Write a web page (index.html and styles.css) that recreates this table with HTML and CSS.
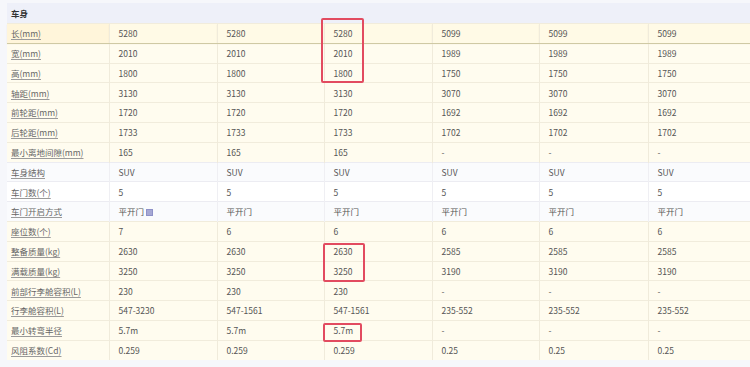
FILE: index.html
```html
<!DOCTYPE html>
<html lang="zh">
<head>
<meta charset="utf-8">
<link rel="stylesheet" href="styles.css">
</head>
<body>
<div class="page">
  <div class="wrap">
    <table class="spec">
      <colgroup>
        <col class="c-label"><col class="c1"><col class="c2"><col class="c3"><col class="c4"><col class="c5"><col class="c6">
      </colgroup>
      <thead>
        <tr class="group"><th colspan="7">车身</th></tr>
      </thead>
      <tbody>
        <tr class="hl"><td class="lb"><span>长(mm)</span></td><td>5280</td><td>5280</td><td>5280</td><td>5099</td><td>5099</td><td>5099</td></tr>
        <tr><td class="lb"><span>宽(mm)</span></td><td>2010</td><td>2010</td><td>2010</td><td>1989</td><td>1989</td><td>1989</td></tr>
        <tr><td class="lb"><span>高(mm)</span></td><td>1800</td><td>1800</td><td>1800</td><td>1750</td><td>1750</td><td>1750</td></tr>
        <tr><td class="lb"><span>轴距(mm)</span></td><td>3130</td><td>3130</td><td>3130</td><td>3070</td><td>3070</td><td>3070</td></tr>
        <tr><td class="lb"><span>前轮距(mm)</span></td><td>1720</td><td>1720</td><td>1720</td><td>1692</td><td>1692</td><td>1692</td></tr>
        <tr><td class="lb"><span>后轮距(mm)</span></td><td>1733</td><td>1733</td><td>1733</td><td>1702</td><td>1702</td><td>1702</td></tr>
        <tr><td class="lb"><span>最小离地间隙(mm)</span></td><td>165</td><td>165</td><td>165</td><td>-</td><td>-</td><td>-</td></tr>
        <tr class="plain alt"><td class="lb"><span>车身结构</span></td><td>SUV</td><td>SUV</td><td>SUV</td><td>SUV</td><td>SUV</td><td>SUV</td></tr>
        <tr class="plain"><td class="lb"><span>车门数(个)</span></td><td>5</td><td>5</td><td>5</td><td>5</td><td>5</td><td>5</td></tr>
        <tr class="plain alt"><td class="lb"><span>车门开启方式</span></td><td>平开门<i class="mark"></i></td><td>平开门</td><td>平开门</td><td>平开门</td><td>平开门</td><td>平开门</td></tr>
        <tr><td class="lb"><span>座位数(个)</span></td><td>7</td><td>6</td><td>6</td><td>6</td><td>6</td><td>6</td></tr>
        <tr><td class="lb"><span>整备质量(kg)</span></td><td>2630</td><td>2630</td><td>2630</td><td>2585</td><td>2585</td><td>2585</td></tr>
        <tr><td class="lb"><span>满载质量(kg)</span></td><td>3250</td><td>3250</td><td>3250</td><td>3190</td><td>3190</td><td>3190</td></tr>
        <tr><td class="lb"><span>前部行李舱容积(L)</span></td><td>230</td><td>230</td><td>230</td><td>-</td><td>-</td><td>-</td></tr>
        <tr><td class="lb"><span>行李舱容积(L)</span></td><td>547-3230</td><td>547-1561</td><td>547-1561</td><td>235-552</td><td>235-552</td><td>235-552</td></tr>
        <tr><td class="lb"><span>最小转弯半径</span></td><td>5.7m</td><td>5.7m</td><td>5.7m</td><td>-</td><td>-</td><td>-</td></tr>
        <tr><td class="lb"><span>风阻系数(Cd)</span></td><td>0.259</td><td>0.259</td><td>0.259</td><td>0.25</td><td>0.25</td><td>0.25</td></tr>
      </tbody>
    </table>
    <div class="box box-a"></div>
    <div class="box box-b"></div>
    <div class="box box-c"></div>
  </div>
</div>
</body>
</html>
```
FILE: styles.css
```css
html, body {
  margin: 0;
  padding: 0;
  background: #f6f7fb;
}
body {
  font-family: "Noto Sans CJK SC", "Open Sans", sans-serif;
  font-size: 8.5px;
  color: #555;
  width: 750px;
  height: 367px;
  overflow: hidden;
}
.page {
  padding: 3px 0 0 7px;
}
.wrap {
  position: relative;
  width: 743px;
}
.spec {
  width: 743px;
  table-layout: fixed;
  border-collapse: collapse;
  background: #fffcef;
}
.c-label { width: 102px; }
.c1 { width: 108px; }
.c2 { width: 107px; }
.c3 { width: 108px; }
.c4 { width: 107px; }
.c5 { width: 109px; }
.c6 { width: 102px; }

.group th {
  height: 20px;
  padding: 0 0 0 4px;
  text-align: left;
  font-weight: bold;
  font-size: 8.5px;
  color: #333;
  background: #eef0f9;
  border: none;
}
.spec td {
  height: 19.8px;
  padding: 0 0 0 9px;
  box-sizing: border-box;
  border-top: 1px solid #f1ecdc;
  border-left: 1px solid #f0ebdb;
  white-space: nowrap;
  line-height: 1;
}
.spec td.lb {
  padding-left: 4px;
  border-left: none;
  color: #666;
}
.lb span {
  text-decoration: underline;
  text-decoration-color: #9a9a9a;
  text-underline-offset: 2px;
}
.hl td {
  background: #fffae6;
  border-bottom: 1px solid #cfc9a4;
  box-shadow: 0 1px 1px rgba(150, 140, 90, 0.2);
}
.hl td.lb {
  background: #fff5da;
}
.plain td {
  background: #ffffff;
  border-top-color: #ececf2;
  border-left-color: #efeff3;
}
.plain.alt td {
  background: #fafbfd;
}
.mark {
  display: inline-block;
  width: 5px;
  height: 5px;
  margin-left: 2px;
  background: #a6a8d4;
  vertical-align: -1px;
  border: 1px solid #8e91c8;
}
.box {
  position: absolute;
  border: 2px solid #e24b60;
  border-radius: 2px;
  box-sizing: border-box;
}
.box-a { left: 314px; top: 15px; width: 43px; height: 65px; }
.box-b { left: 316px; top: 240px; width: 42px; height: 39px; }
.box-c { left: 316px; top: 320px; width: 39px; height: 19px; }
```
